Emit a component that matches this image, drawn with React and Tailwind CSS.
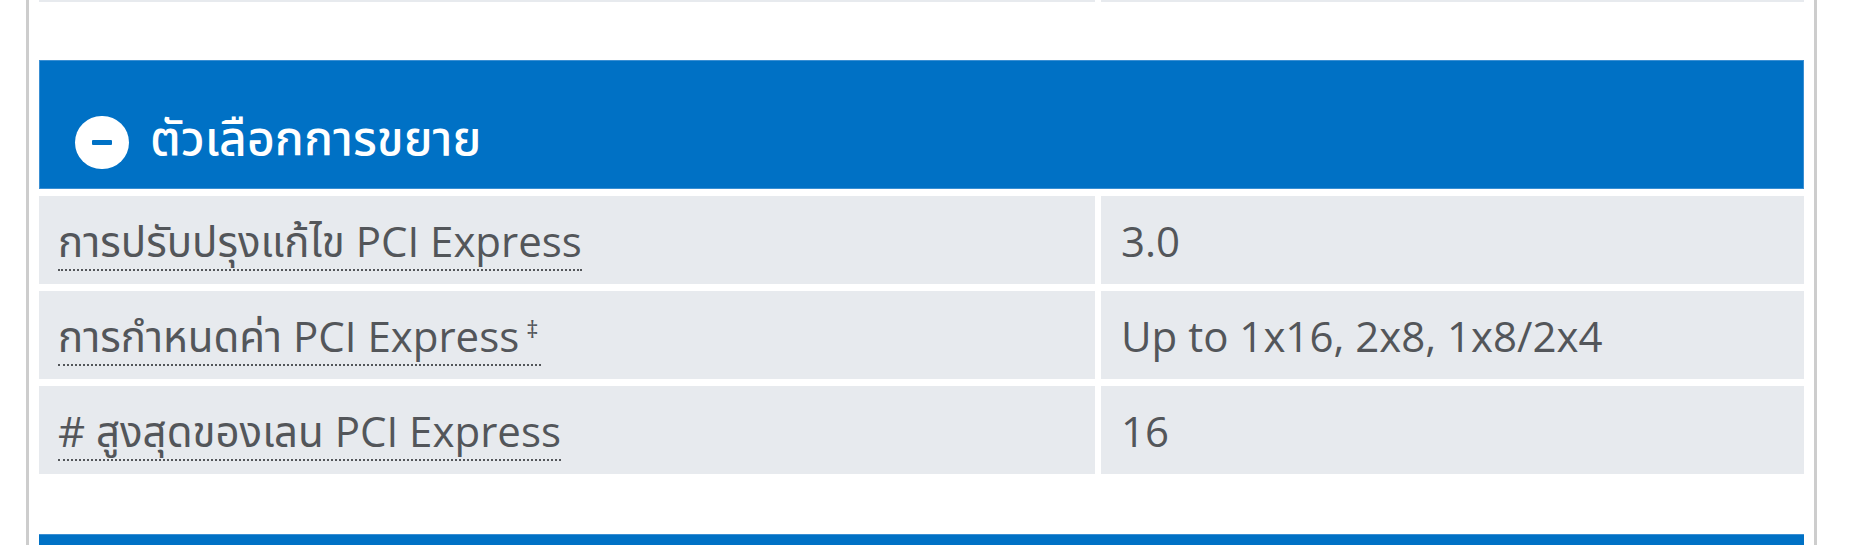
const rows = [
  { label: 'การปรับปรุงแก้ไข PCI Express', value: '3.0' },
  { label: 'การกำหนดค่า PCI Express', value: 'Up to 1x16, 2x8, 1x8/2x4', note: '‡' },
  { label: '# สูงสุดของเลน PCI Express', value: '16' },
];

const font = { fontFamily: '"Open Sans", "Noto Sans", "Noto Sans Thai", "DejaVu Sans", sans-serif' };

const SectionHeader = ({ title }) => (
  <div className="flex items-center bg-[#0071c5] border border-[#3a8fd3] h-[129px] pt-[36px] pl-[35px]">
    <div className="w-[54px] h-[53px] rounded-full bg-white flex items-center justify-center shrink-0">
      <div className="w-[20px] h-[5px] bg-[#0071c5] rounded-[1px]" />
    </div>
    <h2 className="ml-[21px] mb-[12px] text-white text-[48px] font-medium leading-none">{title}</h2>
  </div>
);

export default function App() {
  return (
    <div className="bg-white min-h-[545px] pl-[26px] pr-[36px] text-[#53565a]" style={font}>
      <div className="border-x-[3px] border-[#cdcdcd] px-[10px] min-h-[545px]">
        {/* tail of the previous table */}
        <div className="grid grid-cols-[1056px_1fr] gap-x-[6px]">
          <div className="h-[2px] bg-[#e7eaee]" />
          <div className="h-[2px] bg-[#e7eaee]" />
        </div>

        <div className="pt-[58px]">
          <SectionHeader title="ตัวเลือกการขยาย" />
          <div className="grid grid-cols-[1056px_1fr] gap-x-[6px] gap-y-[7px] mt-[7px]">
            {rows.map((r) => (
              <div key={r.label} className="contents">
                <div className="bg-[#e7eaee] h-[88px] px-[19px] pt-[13px] text-[42px] leading-[63px] whitespace-nowrap">
                  <span className="border-b-2 border-dotted border-[#53565a]">
                    {r.label}
                    {r.note && <sup className="text-[24px] ml-[7px] mr-[3px] top-[-14px]">{r.note}</sup>}
                  </span>
                </div>
                <div className="bg-[#e7eaee] h-[88px] px-[20px] pt-[13px] text-[42px] leading-[63px] whitespace-nowrap">
                  {r.value}
                </div>
              </div>
            ))}
          </div>
        </div>

        <div className="pt-[60px]">
          <div className="bg-[#0071c5] border-t border-[#3a8fd3] h-[129px]" />
        </div>
      </div>
    </div>
  );
}
